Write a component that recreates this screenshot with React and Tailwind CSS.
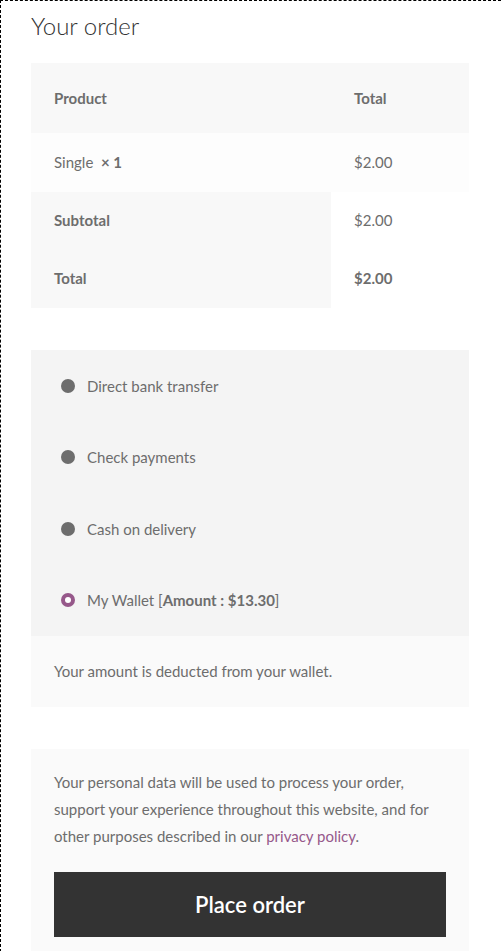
export default function App() {
  const font = { fontFamily: '"Source Sans Pro", Lato, "Noto Sans", sans-serif' };
  return (
    <div className="min-h-[951px] border-t border-l border-dashed border-black px-[30px] text-[#6d6d6d]" style={font}>
      <h3 className="pt-[8px] text-[24px] font-light leading-[34px] text-[#333]">Your order</h3>
      <table className="mt-[20px] w-[438px] border-collapse text-[15px]">
        <thead>
          <tr className="h-[70px] bg-[#f8f8f8]">
            <th className="w-[300px] pl-[23px] text-left font-bold">Product</th>
            <th className="pl-[23px] text-left font-bold">Total</th>
          </tr>
        </thead>
        <tbody>
          <tr className="h-[59px] bg-[#fdfdfd]">
            <td className="pl-[23px]">Single&nbsp; <strong className="font-bold">× 1</strong></td>
            <td className="pl-[23px]">$2.00</td>
          </tr>
        </tbody>
        <tfoot>
          <tr className="h-[58px]">
            <th className="bg-[#f8f8f8] pl-[23px] pb-[2px] text-left font-bold">Subtotal</th>
            <td className="bg-white pl-[23px] pb-[2px]">$2.00</td>
          </tr>
          <tr className="h-[58px]">
            <th className="bg-[#f8f8f8] pl-[23px] pb-[2px] text-left font-bold">Total</th>
            <td className="bg-white pl-[23px] pb-[2px] font-bold">$2.00</td>
          </tr>
        </tfoot>
      </table>

      <div className="mt-[42px] w-[438px] text-[15px]">
        <ul className="bg-[#f4f4f4] px-[30px]">
          {["Direct bank transfer", "Check payments", "Cash on delivery"].map((t) => (
            <li key={t} className="flex h-[71.5px] items-center">
              <span className="mr-[12px] h-[14px] w-[14px] rounded-full bg-[#6d6d6d]" />
              <span>{t}</span>
            </li>
          ))}
          <li className="flex h-[71.5px] items-center">
            <span className="mr-[12px] flex h-[14px] w-[14px] items-center justify-center rounded-full bg-[#96588a]">
              <span className="h-[6px] w-[6px] rounded-full bg-white" />
            </span>
            <span>
              My Wallet [<strong className="font-bold">Amount : $13.30</strong>]
            </span>
          </li>
        </ul>
        <div className="flex h-[71px] items-center bg-[#fafafa] px-[23px]">
          Your amount is deducted from your wallet.
        </div>
      </div>

      <div className="mt-[42px] w-[438px] bg-[#fafafa] px-[23px] pt-[20px] pb-[20px] text-[15px]">
        <p className="leading-[27px]">
          Your personal data will be used to process your order, support your experience throughout this website, and for other purposes described in our{" "}
          <a className="text-[#96588a]">privacy policy</a>.
        </p>
        <button className="mt-[22px] h-[65px] w-full bg-[#333] text-[22px] font-semibold text-white">
          Place order
        </button>
      </div>
    </div>
  );
}
